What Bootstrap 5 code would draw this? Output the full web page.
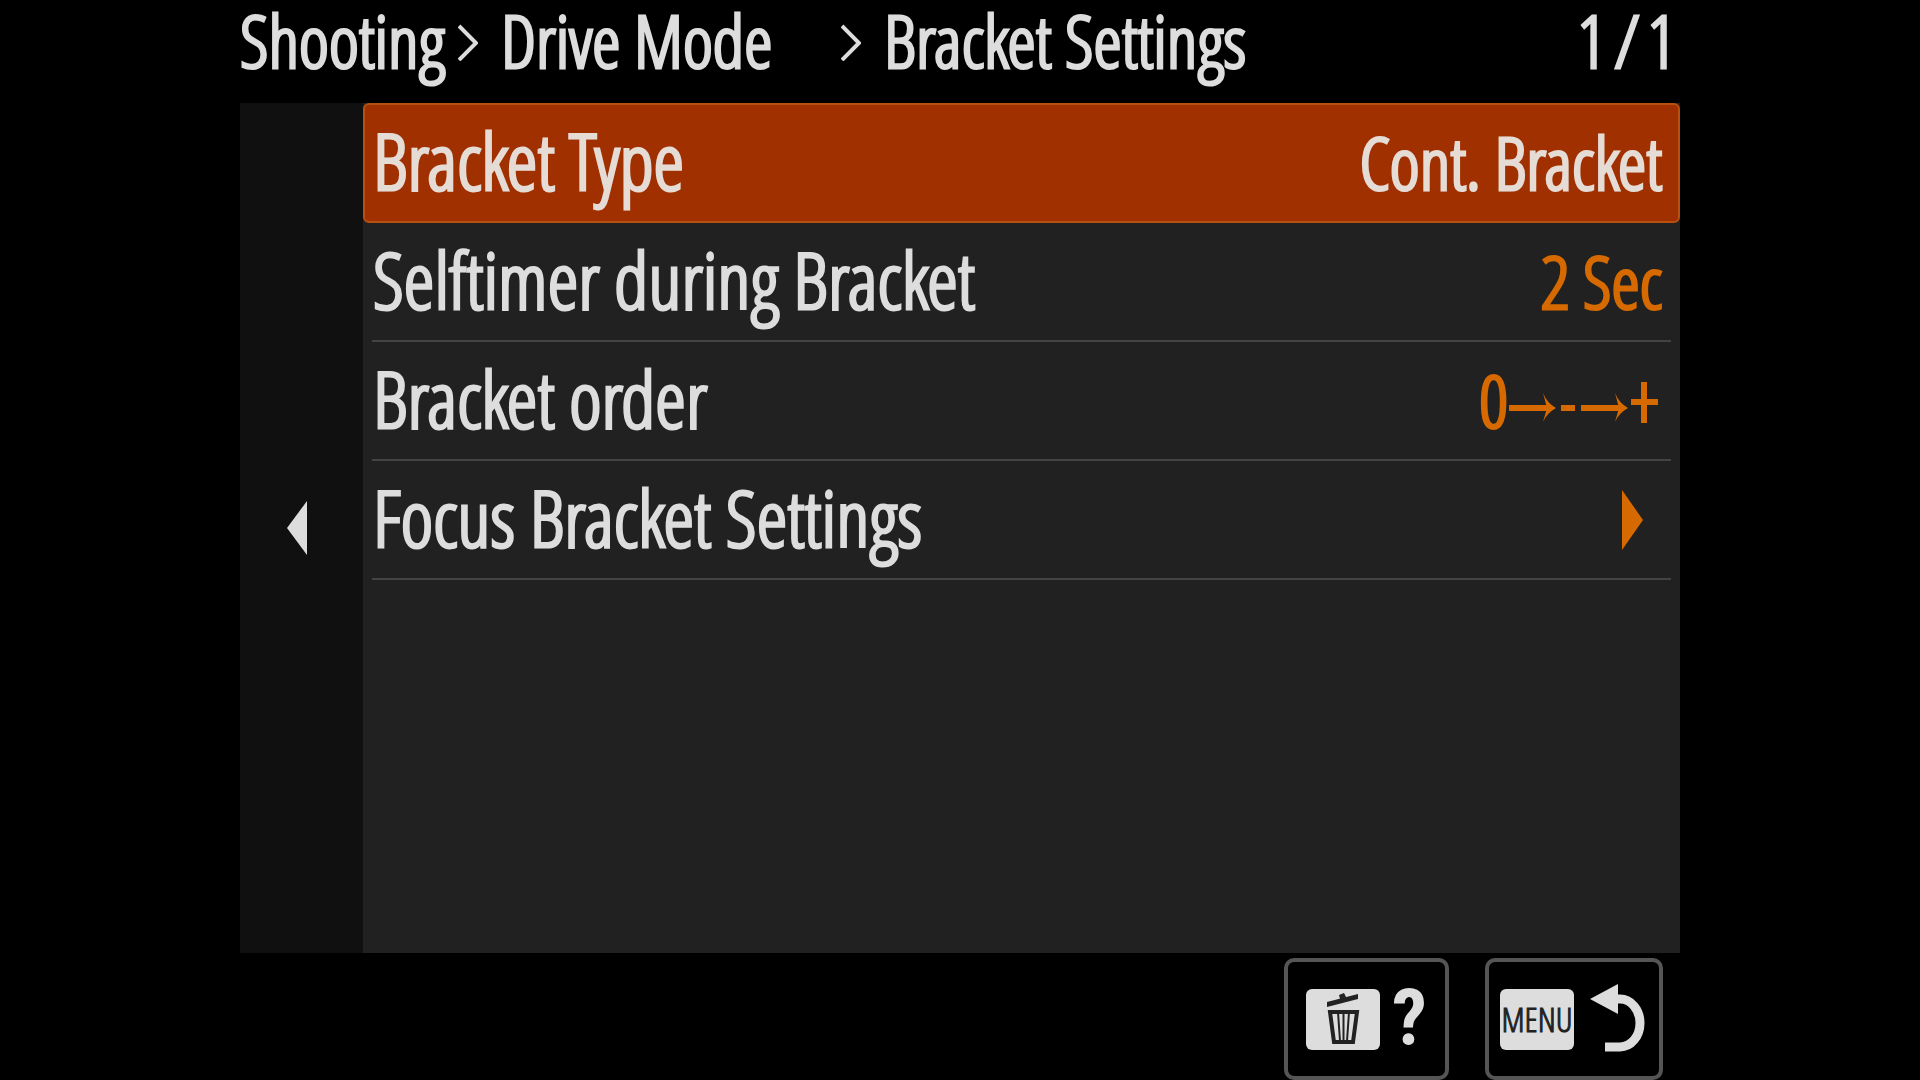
<!DOCTYPE html>
<html lang="en">
<head>
<meta charset="utf-8">
<meta name="viewport" content="width=device-width, initial-scale=1">
<title>Bracket Settings</title>
<link href="https://cdn.jsdelivr.net/npm/bootstrap@5.3.0/dist/css/bootstrap.min.css" rel="stylesheet">
<style>
body{background:#000;color:#ddd;font-family:"Open Sans Condensed Light","Open Sans Condensed","Roboto Condensed",sans-serif;font-weight:300;-webkit-text-stroke:3px currentColor}
.screen{width:75%}
.topbar{height:103px;padding-bottom:23px;font-size:72px;line-height:80px}
.crumb-link,.crumb-link:hover{color:inherit;text-decoration:none}
.crumb-first{width:218px}
.crumb-mid{width:340px}
.crumb-sep{width:20px;height:42px;margin-right:23px}
.side{width:123px;background:#101010}
.side button{width:100%;padding:0 22px 0 12px;color:#ddd}
.panel{background:#212121}
.item{height:117px;padding:0 18px 0 10px;color:#ddd;font-size:78px;line-height:112px;font-weight:300;text-align:left;background:none;border:0}
.item-rule{height:2px;margin:0 9px;background:#444}
.item-on{height:120px;line-height:110px;background:#a03000;border:2px solid #b8500f;border-radius:6px;padding:0 16px 0 8px;color:#e6dcd6}
.item-value{font-size:72px}
.item-off .item-value{color:#d66a00}
.keybar{height:127px;padding:5px 17px 0;gap:36px}
.keybtn{height:122px;border:4px solid #555;border-radius:10px;background:#000;color:#ddd}
.keybtn-help{width:165px;gap:12px}
.keybtn-back{width:178px}
.keycap{width:74px;height:61px;border-radius:6px;background:#ddd;color:#222}
.keycap-text{font-size:34px;line-height:61px;-webkit-text-stroke-width:1px}
.glyph{font-family:"Roboto Condensed",sans-serif;font-size:78px;line-height:76px;font-weight:bold;-webkit-text-stroke-width:0}
</style>
</head>
<body>
<div class="screen mx-auto min-vh-100 d-flex flex-column">
  <header class="topbar d-flex align-items-center justify-content-between">
    <nav class="d-flex align-items-center" aria-label="Menu path">
      <a class="crumb-link crumb-first" href="#">Shooting</a>
      <svg class="crumb-sep" viewBox="0 0 20 42" aria-hidden="true"><path d="M1 7L18 24L1 41" fill="none" stroke="#ddd" stroke-width="4"/></svg>
      <a class="crumb-link crumb-mid" href="#">Drive Mode</a>
      <svg class="crumb-sep" viewBox="0 0 20 42" aria-hidden="true"><path d="M1 7L18 24L1 41" fill="none" stroke="#ddd" stroke-width="4"/></svg>
      <span>Bracket Settings</span>
    </nav>
    <span class="me-1">1<span class="mx-2">/</span>1</span>
  </header>
  <main class="d-flex flex-grow-1">
    <div class="side d-flex align-items-center">
      <button class="btn border-0" type="button" aria-label="Back">
        <svg width="20" height="54" viewBox="0 0 20 54"><path d="M20 0V54L0 27Z" fill="currentColor"/></svg>
      </button>
    </div>
    <div class="panel flex-grow-1 d-flex flex-column">
      <button type="button" class="item item-on d-flex align-items-baseline justify-content-between"><span>Bracket Type</span><span class="item-value">Cont. Bracket</span></button>
      <button type="button" class="item item-off d-flex align-items-baseline justify-content-between"><span>Selftimer during Bracket</span><span class="item-value">2 Sec</span></button>
      <div class="item-rule"></div>
      <button type="button" class="item item-off d-flex align-items-baseline justify-content-between"><span>Bracket order</span>
        <span class="item-value">0<svg class="align-baseline" width="154" height="54" viewBox="0 0 154 54" aria-hidden="true"><g fill="none" stroke="currentColor" stroke-width="6"><path d="M1 34H43M53 34H67M73 34H115"/><path d="M123 28H150M136 8V49" stroke-width="6"/></g><path d="M35 19Q39 29 48 34Q39 39 35 48L39 34ZM107 19Q111 29 120 34Q111 39 107 48L111 34Z" fill="currentColor"/></svg></span></button>
      <div class="item-rule"></div>
      <button type="button" class="item item-off d-flex align-items-baseline justify-content-between"><span>Focus Bracket Settings</span>
        <svg class="item-value align-self-center" width="40" height="60" viewBox="0 0 40 60" aria-hidden="true"><path d="M0 0V60L21 30Z" fill="currentColor"/></svg></button>
      <div class="item-rule"></div>
    </div>
  </main>
  <footer class="keybar d-flex justify-content-end">
    <button type="button" class="keybtn keybtn-help p-0 d-flex align-items-center justify-content-center" aria-label="Delete key: help">
      <span class="keycap d-flex align-items-center justify-content-center"><svg width="34" height="52" viewBox="0 0 34 52" aria-hidden="true"><path d="M1 9L32 1V6L1 14ZM13 2L18 0L20 4L14 6Z" fill="#222"/><path d="M4 19H31L27 49H8Z" fill="none" stroke="#222" stroke-width="4"/><path d="M12 19L14 48M17.500 19V48M23 19L21 48" stroke="#222" stroke-width="2"/></svg></span>
      <span class="glyph">?</span>
    </button>
    <button type="button" class="keybtn keybtn-back p-0 d-flex align-items-center justify-content-center gap-3" aria-label="Menu key: return">
      <span class="keycap keycap-text text-center">MENU</span>
      <svg width="58" height="70" viewBox="0 0 58 70" aria-hidden="true"><path d="M26 15H30A20 24 0 0 1 30 63H15" fill="none" stroke="#ddd" stroke-width="9"/><path d="M0 15L28 0V30Z" fill="#ddd"/></svg>
    </button>
  </footer>
</div>
<script src="https://cdn.jsdelivr.net/npm/bootstrap@5.3.0/dist/js/bootstrap.bundle.min.js"></script>
</body>
</html>
